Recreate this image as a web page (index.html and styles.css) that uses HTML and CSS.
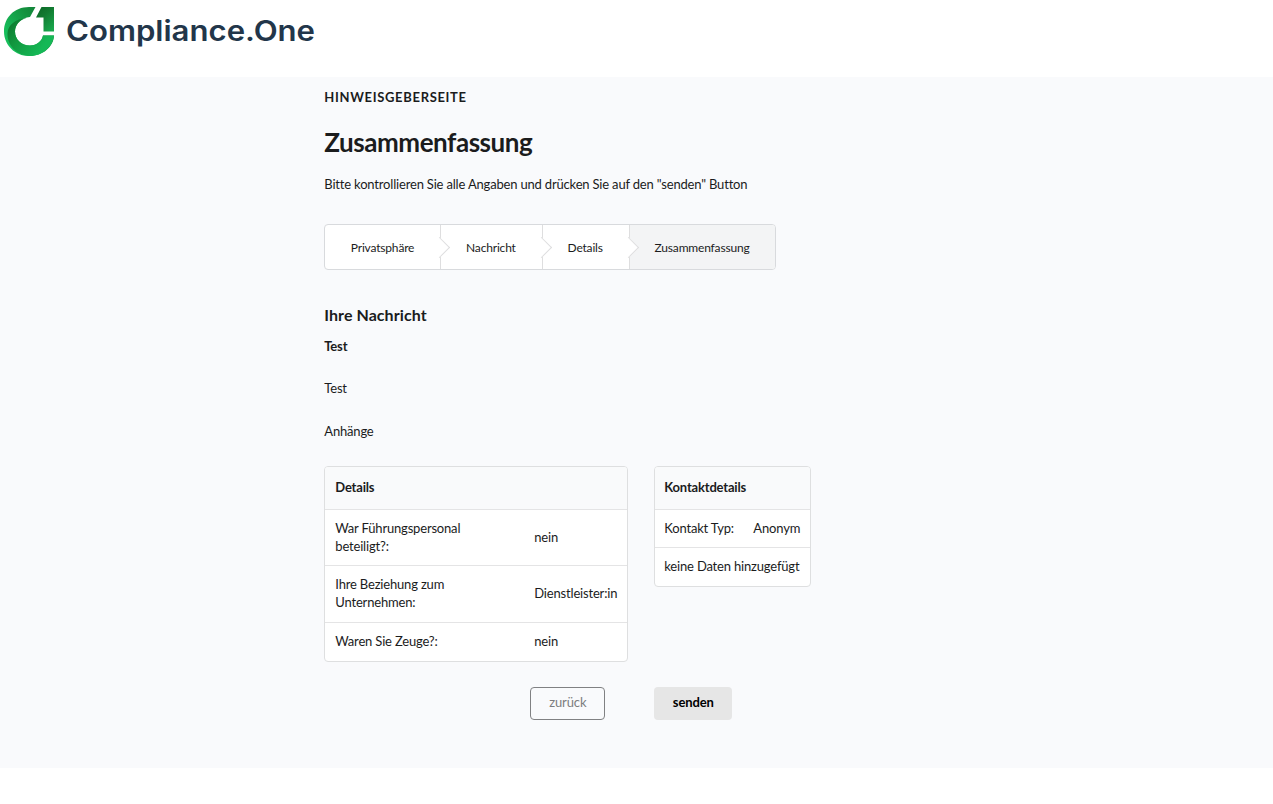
FILE: index.html
```
<!doctype html>
<html lang="de">

<head>
    <meta charset="UTF-8">
    <title>Hinweisgeberseite</title>
    <link rel="stylesheet" href="styles.css">
</head>

<body>
    <header class="header">
        <svg class="logo" width="320" height="60" viewBox="0 0 320 60">
            <defs>
                <linearGradient id="ring" x1="1" y1="0" x2="0.1" y2="0.6">
                    <stop offset="0" stop-color="#0f7030"/>
                    <stop offset="0.5" stop-color="#14923f"/>
                    <stop offset="1" stop-color="#17be5b"/>
                </linearGradient>
                <linearGradient id="sweep" x1="0" y1="0.2" x2="0.8" y2="0.7">
                    <stop offset="0" stop-color="#0d7a30"/>
                    <stop offset="0.4" stop-color="#12983f"/>
                    <stop offset="1" stop-color="#15b856"/>
                </linearGradient>
                <linearGradient id="flag" x1="0.1" y1="0" x2="0.8" y2="1">
                    <stop offset="0" stop-color="#0c6826"/>
                    <stop offset="0.4" stop-color="#127a31"/>
                    <stop offset="1" stop-color="#18a74c"/>
                </linearGradient>
            </defs>
            <path fill="url(#ring)" d="M35.500 7H29C14 7 4 18 4 31.500C4 45 15 56 29 56C43 56 53.500 47 54 35.500H43C42 41 37 45.500 30 45.500C21.500 45.500 15 39.500 15 31.500C15 24 21 17.500 30 17Z"/>
            <path fill="url(#sweep)" d="M7.500 33C8 25 15 19 27 17.700C19 20 15 25.500 15 31.500C15 39.500 21.500 45.500 30 45.500C37 45.500 42 41 43 35.500H54C53 46 43 56 30 56C16 55 7 45 7.500 33Z"/>
            <path fill="url(#flag)" d="M41.500 7H54V31.500H43.500V17.500H36Z"/>
            <text class="logo-text" x="66" y="40.5" textLength="249" lengthAdjust="spacingAndGlyphs">Compliance.One</text>
        </svg>
    </header>

    <main class="main">
        <div class="container">
            <h5 class="site-title">Hinweisgeberseite</h5>
            <h1>Zusammenfassung</h1>
            <p class="intro">Bitte kontrollieren Sie alle Angaben und drücken Sie auf den "senden" Button</p>

            <ol class="steps">
                <li>Privatsphäre</li>
                <li>Nachricht</li>
                <li>Details</li>
                <li class="active">Zusammenfassung</li>
            </ol>

            <h3>Ihre Nachricht</h3>
            <p class="subject">Test</p>
            <p class="message">Test</p>
            <p class="attachments">Anhänge</p>

            <div class="tables">
                <table class="table details">
                    <thead>
                        <tr><th colspan="2">Details</th></tr>
                    </thead>
                    <tbody>
                        <tr class="tall"><td>War Führungspersonal<br>beteiligt?:</td><td>nein</td></tr>
                        <tr class="tall"><td>Ihre Beziehung zum<br>Unternehmen:</td><td>Dienstleister:in</td></tr>
                        <tr><td>Waren Sie Zeuge?:</td><td>nein</td></tr>
                    </tbody>
                </table>
                <table class="table contact">
                    <thead>
                        <tr><th colspan="2">Kontaktdetails</th></tr>
                    </thead>
                    <tbody>
                        <tr><td>Kontakt Typ:</td><td>Anonym</td></tr>
                        <tr><td colspan="2">keine Daten hinzugefügt</td></tr>
                    </tbody>
                </table>
            </div>

            <div class="buttons">
                <button class="button back" type="button">zurück</button>
                <button class="button send" type="button">senden</button>
            </div>
        </div>
    </main>
</body>

</html>
```
FILE: styles.css
```
* {
    box-sizing: border-box;
    margin: 0;
    padding: 0;
}

body {
    background: #fff;
    color: #1b1c1d;
    font: 13px/18px Lato, "Liberation Sans", sans-serif;
    letter-spacing: -.18px;
}

.header {
    height: 77px;
}

.logo {
    display: block;
}

.logo-text {
    fill: #22364a;
    font-family: Inter, sans-serif;
    font-size: 28px;
    font-weight: 600;
    letter-spacing: 0;
}

.main {
    height: 691px;
    background: #f9fafc;
}

.container {
    width: 624.4px;
    margin: 0 auto;
    padding-top: 12px;
}

.site-title {
    font-size: 13px;
    line-height: 17px;
    letter-spacing: .67px;
    text-transform: uppercase;
}

h1 {
    margin-top: 20px;
    font-size: 26px;
    line-height: 32px;
    letter-spacing: -.45px;
}

.intro {
    margin-top: 17px;
}

/* Schritte */
.steps {
    display: flex;
    width: 452px;
    height: 46px;
    margin-top: 31px;
    background: #fff;
    border: 1px solid #d8dadd;
    border-radius: 4px;
    list-style: none;
}

.steps li {
    position: relative;
    flex: 1 0 auto;
    padding: 0 25px;
    border-right: 1px solid #dededf;
    font-size: 12px;
    line-height: 45px;
}

.steps li:first-child {
    padding-left: 25.5px;
}

.steps li:last-child {
    border-right: 0;
    border-radius: 0 3px 3px 0;
}

.steps .active {
    background: #f3f4f5;
}

.steps li:not(:last-child)::after {
    content: "";
    position: absolute;
    z-index: 1;
    top: 15px;
    right: -7px;
    width: 14px;
    height: 14px;
    background: #fff;
    border: solid #dededf;
    border-width: 0 1px 1px 0;
    transform: rotate(-45deg);
}

h3 {
    margin-top: 35px;
    font-size: 16px;
    line-height: 20px;
    letter-spacing: .07px;
}

.subject {
    margin-top: 12px;
    font-weight: 700;
}

.message {
    margin-top: 24px;
}

.attachments {
    margin-top: 25px;
}

/* Tabellen */
.tables {
    display: flex;
    align-items: flex-start;
    gap: 26px;
    margin-top: 26px;
}

.table {
    background: #fff;
    border: 1px solid #dedfe0;
    border-radius: 4px;
    border-spacing: 0;
    text-align: left;
}

.details {
    width: 304px;
}

.contact {
    width: 157px;
}

.table th {
    height: 42px;
    padding: 0 10px 2px;
    background: #f9fafb;
    border-radius: 3px 3px 0 0;
}

.table td {
    height: 38px;
    padding: 0 9px 2px 10px;
    border-top: 1px solid #e4e4e5;
    white-space: nowrap;
}

.table .tall td {
    height: 56px;
}

.table .tall + .tall td {
    height: 57px;
}

.table tr:last-child td {
    height: 39px;
}

.details td:first-child {
    width: 199px;
}

.contact td,
.contact th {
    padding-left: 9px;
}

/* Buttons */
.buttons {
    display: flex;
    gap: 49px;
    margin: 25px 0 0 206px;
}

.button {
    height: 33px;
    padding-bottom: 3px;
    border: 0;
    border-radius: 4px;
    font: 13px Lato, "Liberation Sans", sans-serif;
    letter-spacing: -.1px;
}

.back {
    width: 75px;
    background: transparent;
    border: 1px solid #808183;
    color: #7c7d7e;
}

.send {
    width: 78px;
    background: #e6e6e6;
    color: #000;
    font-weight: 700;
}
```
